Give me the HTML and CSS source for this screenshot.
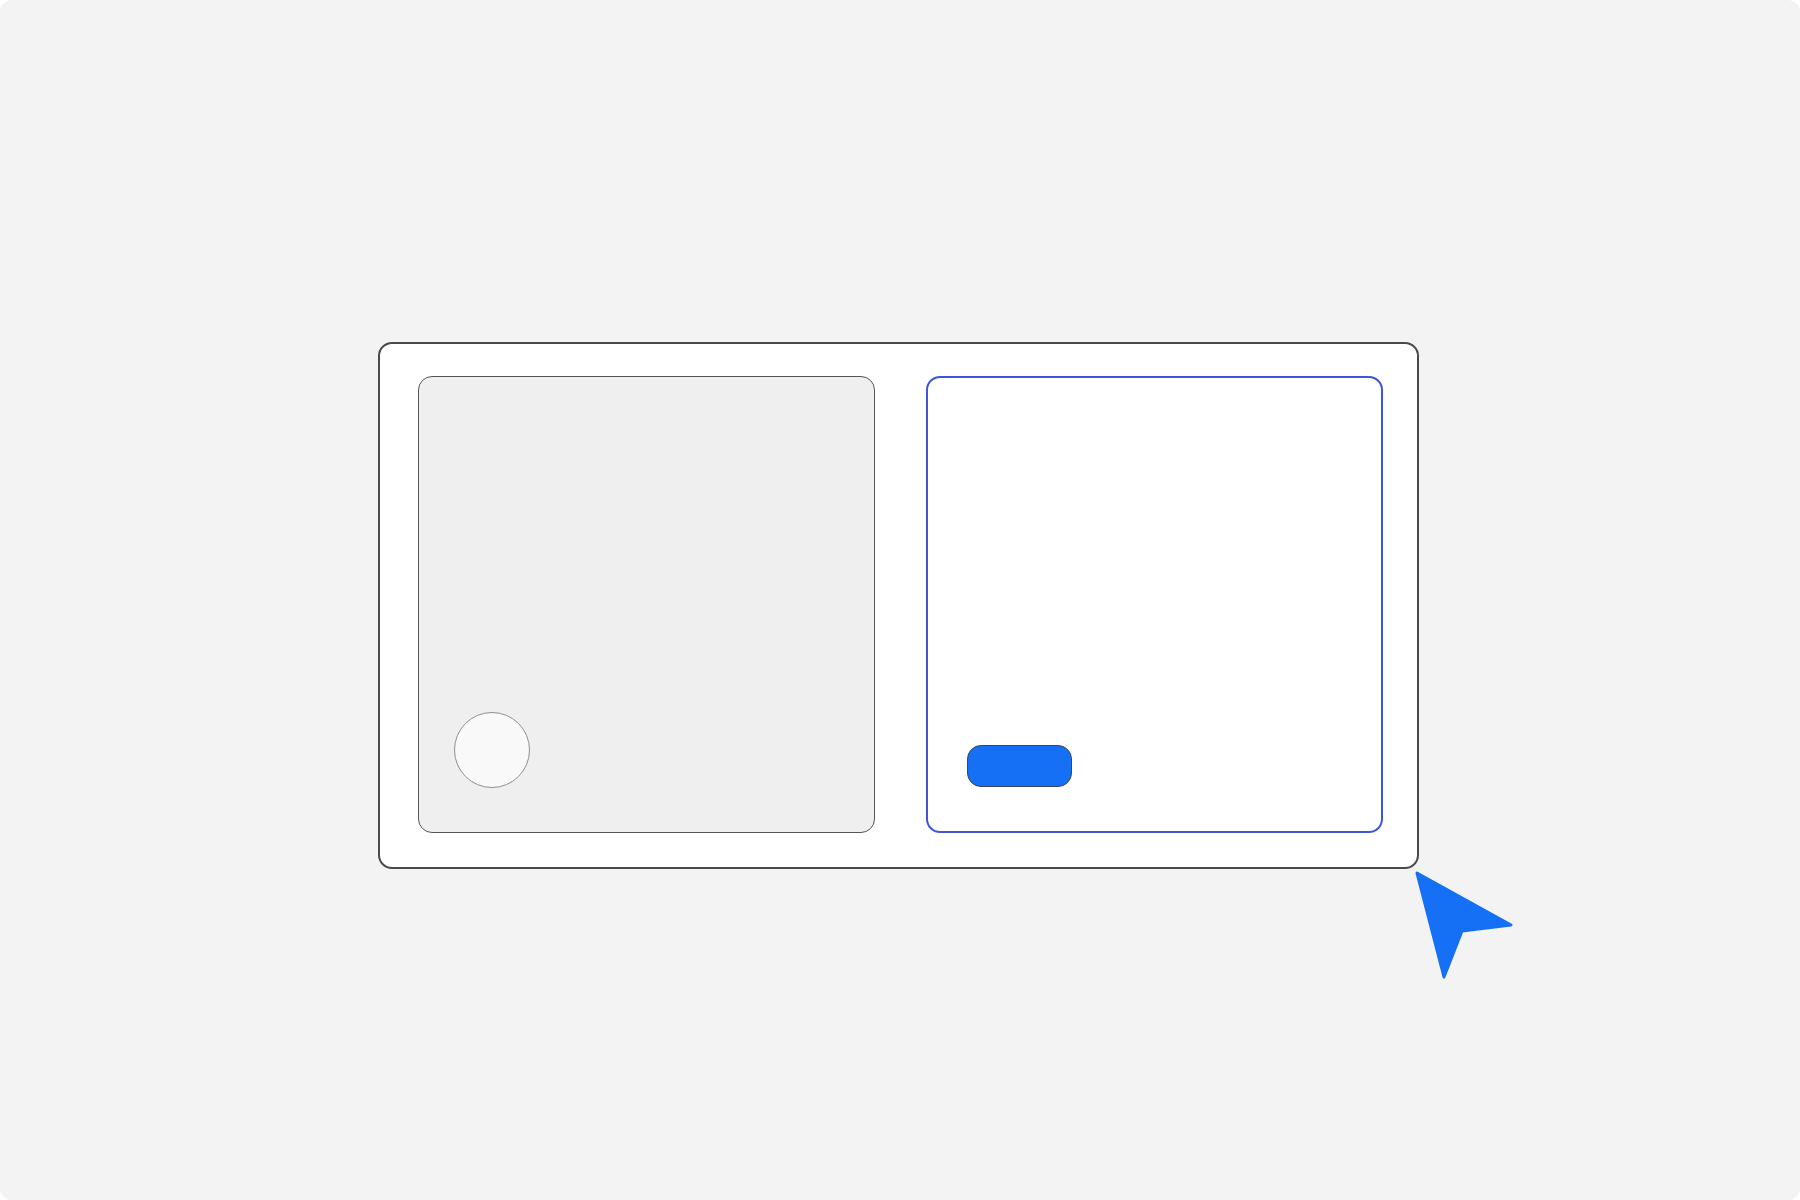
FILE: index.html
```html
<!DOCTYPE html>
<html>
<head>
<meta charset="utf-8">
<link rel="stylesheet" href="styles.css">
</head>
<body>
<div class="frame">
  <div class="window">
    <div class="panel panel-left">
      <div class="knob"></div>
    </div>
    <div class="panel panel-right">
      <div class="btn"></div>
    </div>
    <svg class="cursor" width="110" height="120" viewBox="0 0 110 120">
      <path d="M7 7 L101 59 L52 65 L34 111 Z" fill="#1570f5" stroke="#1570f5" stroke-width="3" stroke-linejoin="round"/>
    </svg>
  </div>
</div>
</body>
</html>
```

FILE: styles.css
```css
html, body {
  margin: 0;
  padding: 0;
  background: #ffffff;
  font-family: "Liberation Sans", Arial, sans-serif;
}

.frame {
  width: 1800px;
  height: 1200px;
  background: #f3f3f3;
  border-radius: 12px;
  box-sizing: border-box;
  padding-top: 342px;
  padding-left: 378px;
}

.window {
  position: relative;
  width: 1041px;
  height: 527px;
  box-sizing: border-box;
  background: #ffffff;
  border: 2px solid #4a4a4a;
  border-radius: 14px;
  padding: 32px 0 0 38px;
  display: flex;
  gap: 51px;
}

.panel {
  flex-shrink: 0;
  width: 457px;
  height: 457px;
  box-sizing: border-box;
  border-radius: 14px;
  display: flex;
  align-items: flex-end;
  padding-bottom: 44px;
}

.panel-left {
  background: #efefef;
  border: 1px solid #555555;
  padding-left: 35px;
}

.panel-right {
  background: #ffffff;
  border: 2px solid #3d55d6;
  padding-left: 39px;
}

.knob {
  width: 76px;
  height: 76px;
  box-sizing: border-box;
  border-radius: 50%;
  background: #f9f9f9;
  border: 1px solid #909090;
}

.btn {
  width: 105px;
  height: 42px;
  box-sizing: border-box;
  border-radius: 14px;
  background: #1570f5;
  border: 1px solid #3a4660;
}

.cursor {
  position: absolute;
  left: 1030px;
  top: 522px;
  display: block;
}
```
